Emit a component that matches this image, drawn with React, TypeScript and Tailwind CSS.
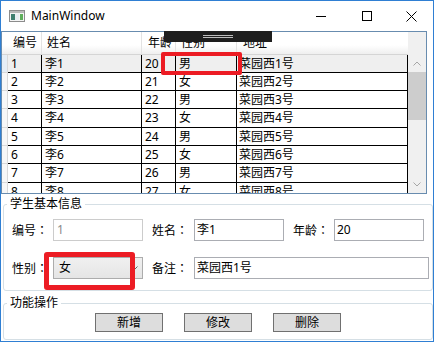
import React from 'react';

const rows = [
  { id: '1', name: '李1', age: '20', sex: '男', addr: '菜园西1号', h: 'h-[18px]' },
  { id: '2', name: '李2', age: '21', sex: '女', addr: '菜园西2号', h: 'h-[18px]' },
  { id: '3', name: '李3', age: '22', sex: '男', addr: '菜园西3号', h: 'h-[18px]' },
  { id: '4', name: '李4', age: '23', sex: '女', addr: '菜园西4号', h: 'h-[19px]' },
  { id: '5', name: '李5', age: '24', sex: '男', addr: '菜园西5号', h: 'h-[18px]' },
  { id: '6', name: '李6', age: '25', sex: '女', addr: '菜园西6号', h: 'h-[18px]' },
  { id: '7', name: '李7', age: '26', sex: '男', addr: '菜园西7号', h: 'h-[19px]' },
  { id: '8', name: '李8', age: '27', sex: '女', addr: '菜园西8号', h: 'h-[18px]' },
];

const Chevron = ({ up }: { up?: boolean }) => (
  <svg width="8" height="5" viewBox="0 0 8 5" className={up ? '' : 'rotate-180'}>
    <path d="M0.5 4.5 L4 1 L7.5 4.5" fill="none" stroke="#a6a6a6" strokeWidth="1" />
  </svg>
);

const AppIcon = () => (
  <svg width="16" height="12" viewBox="0 0 16 12">
    <rect x="0.5" y="0.5" width="15" height="11" fill="#f4f4f4" stroke="#8c8c8c" />
    <rect x="1" y="1" width="14" height="2" fill="#b9b9b9" />
    <rect x="2" y="4" width="4" height="6" fill="#3f7f6f" />
    <rect x="6" y="4" width="4" height="6" fill="#e8eef2" />
    <rect x="11" y="4" width="3" height="6" fill="#5fae5c" />
  </svg>
);

// full-width colon centred in its cell, like the Windows UI font
const Label = ({ text, w }: { text: string; w: string }) => (
  <span className={w}>
    {text}
    <span className="font-['Noto_Sans_CJK_TC',sans-serif]">：</span>
  </span>
);

export default function App() {
  return (
    <div className="relative w-[436px] h-[343px] bg-white text-[12px] leading-[16px] text-black font-['Noto_Sans','Noto_Sans_CJK_SC',sans-serif]">
      <div className="w-[434px] h-[342px] border border-[#2f7fd3] flex flex-col">
        {/* Title bar */}
        <div className="h-[30px] shrink-0 flex items-center">
          <div className="ml-[8px] flex items-center">
            <AppIcon />
          </div>
          <span className="ml-[6px] text-[12px]">MainWindow</span>
          <div className="ml-auto flex h-full">
            <div className="w-[46px] flex items-center justify-center">
              <div className="w-[10px] h-px bg-black" />
            </div>
            <div className="w-[46px] flex items-center justify-center">
              <div className="w-[10px] h-[10px] border border-black" />
            </div>
            <div className="w-[43px] flex items-center justify-center">
              <svg width="11" height="11" viewBox="0 0 11 11">
                <path d="M0.5 0.5 L10.5 10.5 M10.5 0.5 L0.5 10.5" stroke="#000" strokeWidth="1" />
              </svg>
            </div>
          </div>
        </div>

        {/* DataGrid */}
        <div className="w-[426px] h-[163px] shrink-0 border border-[#688caf] flex overflow-hidden">
          <div className="w-[406px] flex flex-col">
            <div className="h-[23px] shrink-0 flex border-b border-[#d5d5d5] bg-gradient-to-b from-white from-60% to-[#efefef]">
              <div className="w-[6px] shrink-0" />
              <div className="w-[34px] shrink-0 border-r border-[#e3e3e3] pl-[5px] flex items-center">编号</div>
              <div className="w-[100px] shrink-0 border-r border-[#e3e3e3] pl-[5px] flex items-center">姓名</div>
              <div className="w-[34px] shrink-0 border-r border-[#e3e3e3] pl-[6px] flex items-center">年龄</div>
              <div className="w-[61px] shrink-0 border-r border-[#e3e3e3] pl-[5px] flex items-center">性别</div>
              <div className="w-[171px] shrink-0 pl-[6px] flex items-center">地址</div>
            </div>
            {rows.map((r, i) => (
              <div key={r.id} className={`${r.h} shrink-0 flex ${i === 0 ? 'bg-[#efefef]' : ''}`}>
                <div className={`w-[6px] shrink-0 border-r border-b border-[#d9d9d9] ${i === 0 ? 'bg-[#e6eef6]' : 'bg-[#f7f7f7]'}`} />
                <div className="w-[34px] shrink-0 border-r border-b border-black pl-[3px] flex items-center">{r.id}</div>
                <div className="w-[100px] shrink-0 border-r border-b border-black pl-[3px] flex items-center">{r.name}</div>
                <div className="w-[34px] shrink-0 border-r border-b border-black pl-[3px] flex items-center">{r.age}</div>
                <div className="w-[61px] shrink-0 border-r border-b border-black pl-[3px] flex items-center">{r.sex}</div>
                <div className="w-[171px] shrink-0 border-r border-b border-black pl-[2px] flex items-center">{r.addr}</div>
              </div>
            ))}
          </div>
          <div className="w-[18px] shrink-0 flex flex-col bg-[#f0f0f0]">
            <div className="h-[23px] shrink-0" />
            <div className="h-[17px] shrink-0 flex items-center justify-center">
              <Chevron up />
            </div>
            <div className="h-[48px] shrink-0 bg-[#cdcdcd]" />
            <div className="flex-1" />
            <div className="h-[17px] shrink-0 flex items-center justify-center">
              <Chevron />
            </div>
          </div>
        </div>

        {/* 学生基本信息 */}
        <fieldset className="ml-[2px] mt-[2px] w-[430px] h-[95px] shrink-0 border border-[#d5dfe5] rounded-[3px]">
          <legend className="ml-[3px] px-[3px]">学生基本信息</legend>
          <div className="mt-[7px] flex items-center pl-[8px]">
            <Label text="编号" w="w-[41px]" />
            <div className="w-[90px] h-[22px] border border-[#cccccc] pl-[3px] flex items-center text-[#8a8a8a]">1</div>
            <span className="ml-[9px]" />
            <Label text="姓名" w="w-[42px]" />
            <div className="w-[90px] h-[22px] border border-[#abadb3] pl-[2px] flex items-center">李1</div>
            <span className="ml-[9px]" />
            <Label text="年龄" w="w-[41px]" />
            <div className="w-[90px] h-[22px] border border-[#abadb3] pl-[2px] flex items-center">20</div>
          </div>
          <div className="mt-[16px] flex items-center pl-[8px]">
            <Label text="性别" w="w-[41px]" />
            <div className="w-[90px] h-[22px] border border-[#acacac] bg-gradient-to-b from-[#f0f0f0] to-[#e5e5e5] pl-[5px] pr-[4px] flex items-center justify-between">
              <span>女</span>
              <svg width="7" height="4" viewBox="0 0 7 4">
                <path d="M0.5 0.5 L3.5 3.5 L6.5 0.5" fill="none" stroke="#606060" />
              </svg>
            </div>
            <span className="ml-[9px]" />
            <Label text="备注" w="w-[42px]" />
            <div className="w-[235px] h-[22px] border border-[#abadb3] pl-[2px] flex items-center">菜园西1号</div>
          </div>
        </fieldset>

        {/* 功能操作 */}
        <fieldset className="ml-[2px] mt-[4px] w-[430px] h-[45px] shrink-0 border border-[#d5dfe5] rounded-[3px]">
          <legend className="ml-[3px] px-[3px]">功能操作</legend>
          <div className="mt-[2px] flex justify-center gap-[21px]">
            <button className="w-[68px] h-[19px] bg-[#dddddd] border border-[#707070] flex items-center justify-center">新增</button>
            <button className="w-[68px] h-[19px] bg-[#dddddd] border border-[#707070] flex items-center justify-center">修改</button>
            <button className="w-[68px] h-[19px] bg-[#dddddd] border border-[#707070] flex items-center justify-center">删除</button>
          </div>
        </fieldset>
      </div>

      {/* designer adorner bar */}
      <div className="absolute left-[164px] top-[31px] w-[108px] h-[11px] bg-[#1e1e1e] flex flex-col items-center justify-center gap-[1px]">
        <div className="w-[30px] h-px bg-[#bdbdbd]" />
        <div className="w-[30px] h-px bg-[#bdbdbd]" />
      </div>

      {/* red highlight boxes */}
      <div className="absolute left-[161px] top-[52px] w-[81px] h-[23px] border-4 border-[#ec1c24] rounded-[2px]" />
      <div className="absolute left-[44px] top-[252px] w-[91px] h-[38px] border-[5px] border-[#ec1c24] rounded-[3px]" />
    </div>
  );
}
